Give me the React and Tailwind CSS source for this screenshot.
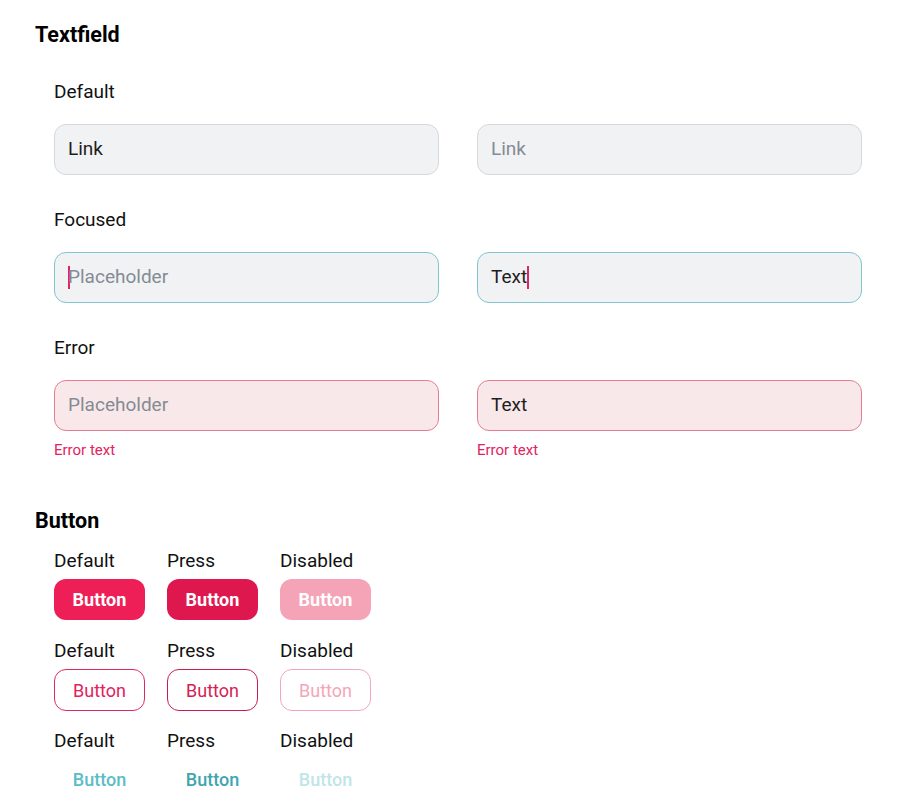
import React from "react";

const Caret = () => (
  <span className="inline-block w-[2px] h-[23px] bg-[#e0245e] align-middle" />
);

function Field({ variant = "default", children, placeholder, caretFirst }) {
  const styles = {
    default: "bg-[#f1f2f4] border-[#d6d8dc]",
    focused: "bg-[#f1f2f4] border-[#7fc6cf]",
    error: "bg-[#f9e8e9] border-[#e57e95]",
  };
  return (
    <div
      className={`w-[385px] h-[51px] rounded-[12px] border flex items-center pl-[13px] text-[19px] ${styles[variant]}`}
    >
      {caretFirst && <span className="mr-[-2px] flex items-center"><Caret /></span>}
      {placeholder ? (
        <span className="text-[#858b94]">{placeholder}</span>
      ) : (
        <span className="text-[#1e1e1e] flex items-center">{children}</span>
      )}
    </div>
  );
}

function Label({ children, className = "" }) {
  return <div className={`text-[19px] leading-[24px] text-[#111] ${className}`}>{children}</div>;
}

function ButtonRow({ buttons, labelMt, btnMt }) {
  const labels = ["Default", "Press", "Disabled"];
  return (
    <div className={`flex gap-[22px] ${labelMt}`}>
      {buttons.map((b, i) => (
        <div key={i} className="flex flex-col w-[91px]">
          <Label className="whitespace-nowrap">{labels[i]}</Label>
          <div className={btnMt}>{b}</div>
        </div>
      ))}
    </div>
  );
}

export default function App() {
  const solid = (bg) => (
    <div className={`w-[91px] h-[41px] rounded-[12px] flex items-center justify-center text-white font-bold text-[18px] ${bg}`}>
      Button
    </div>
  );
  const outline = (cls) => (
    <div className={`w-[91px] h-[42px] rounded-[12px] border flex items-center justify-center text-[18px] bg-white ${cls}`}>
      Button
    </div>
  );
  const text = (cls) => (
    <div className={`w-[91px] h-[41px] flex items-center justify-center text-[18px] font-medium ${cls}`}>
      Button
    </div>
  );

  return (
    <div
      className="w-[912px] h-[811px] bg-white pl-[35px] pt-[21px] overflow-hidden"
      style={{ fontFamily: "Roboto, 'Noto Sans', sans-serif" }}
    >
      <div className="text-[21.5px] leading-[28px] font-bold text-black">Textfield</div>
      <div className="pl-[19px]">
        <Label className="mt-[31px]">Default</Label>
        <div className="flex gap-[38px] mt-[20px]">
          <Field variant="default">Link</Field>
          <Field variant="default" placeholder="Link" />
        </div>

        <Label className="mt-[33px]">Focused</Label>
        <div className="flex gap-[38px] mt-[20px]">
          <Field variant="focused" placeholder="Placeholder" caretFirst />
          <Field variant="focused">
            Text
            <Caret />
          </Field>
        </div>

        <Label className="mt-[33px]">Error</Label>
        <div className="flex gap-[38px] mt-[20px]">
          <div>
            <Field variant="error" placeholder="Placeholder" />
            <div className="mt-[9px] text-[15px] leading-[20px] text-[#e0245e]">Error text</div>
          </div>
          <div>
            <Field variant="error">Text</Field>
            <div className="mt-[9px] text-[15px] leading-[20px] text-[#e0245e]">Error text</div>
          </div>
        </div>
      </div>

      <div className="text-[21.5px] leading-[28px] font-bold text-black mt-[47px]">Button</div>
      <div className="pl-[19px]">
        <ButtonRow
          labelMt="mt-[14px]"
          btnMt="mt-[6px]"
          buttons={[solid("bg-[#ee1f57]"), solid("bg-[#df174f]"), solid("bg-[#f5a4b7]")]}
        />
        <ButtonRow
          labelMt="mt-[19px]"
          btnMt="mt-[6px]"
          buttons={[
            outline("border-[#df2a5e] text-[#e0245e]"),
            outline("border-[#c81d4f] text-[#d41f52]"),
            outline("border-[#f3a7ba] text-[#f4a6b9]"),
          ]}
        />
        <ButtonRow
          labelMt="mt-[18px]"
          btnMt="mt-[6px]"
          buttons={[text("text-[#5bbdc6]"), text("text-[#3fa5ae]"), text("text-[#bfe5e9]")]}
        />
      </div>
    </div>
  );
}
